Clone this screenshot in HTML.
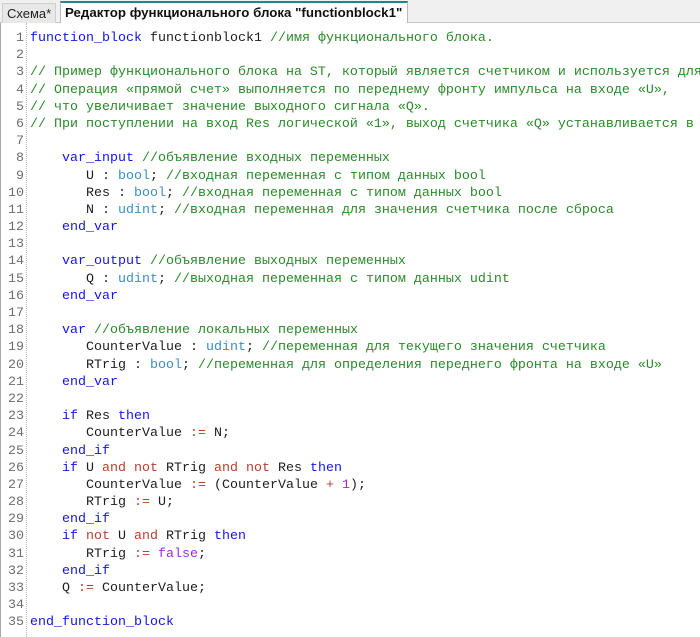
<!DOCTYPE html>
<html><head><meta charset="utf-8"><style>
body{margin:0;width:700px;height:637px;overflow:hidden;background:#fff;font-family:"Liberation Sans",sans-serif}
.tabs{position:absolute;left:0;top:0;width:700px;height:22px;background:#f0f0f0;border-bottom:1px solid #c8c8c8}
.t1{position:absolute;left:2px;top:3px;height:19px;padding:0 4px;font-size:13px;line-height:19px;color:#222;background:#e8e8e8;border:1px solid #cfcfcf;border-bottom:none}
.t2{position:absolute;left:60px;top:1px;height:22px;width:348px;background:#fff;border:1px solid #bbb;border-top:2px solid #1b8a8a;border-bottom:none;font-size:13.3px;font-weight:bold;line-height:20px;padding-left:4px;box-sizing:border-box;color:#111}
.ed{position:absolute;left:0;top:23px;width:700px;height:614px;border-left:1px solid #aaa}
.ln{position:absolute;left:0;top:7px;width:23px;text-align:right;font-family:"Liberation Mono",monospace;font-size:13.33px;line-height:17.18px;color:#6e6e6e;white-space:pre}
.sep{position:absolute;left:25px;top:0;height:614px;border-left:1px dotted #bbb}
.c{position:absolute;left:29px;top:7px;font-family:"Liberation Mono",monospace;font-size:13.33px;line-height:17.18px;white-space:pre;color:#1e1e1e}
.k{color:#1515e0}.g{color:#2a8a2a}.t{color:#3b8fc4}.o{color:#b5402e}.n{color:#9a2be2}
</style></head><body>
<div class="tabs"><div class="t1">Схема*</div><div class="t2">Редактор функционального блока "functionblock1"</div></div>
<div class="ed">
<div class="ln">1
2
3
4
5
6
7
8
9
10
11
12
13
14
15
16
17
18
19
20
21
22
23
24
25
26
27
28
29
30
31
32
33
34
35</div>
<div class="sep"></div>
<div class="c"><span class="k">function_block</span> functionblock1 <span class="g">//имя функционального блока.</span>

<span class="g">// Пример функционального блока на ST, который является счетчиком и используется для</span>
<span class="g">// Операция «прямой счет» выполняется по переднему фронту импульса на входе «U»,</span>
<span class="g">// что увеличивает значение выходного сигнала «Q».</span>
<span class="g">// При поступлении на вход Res логической «1», выход счетчика «Q» устанавливается в</span>

    <span class="k">var_input</span> <span class="g">//объявление входных переменных</span>
       U : <span class="t">bool</span>; <span class="g">//входная переменная с типом данных bool</span>
       Res : <span class="t">bool</span>; <span class="g">//входная переменная с типом данных bool</span>
       N : <span class="t">udint</span>; <span class="g">//входная переменная для значения счетчика после сброса</span>
    <span class="k">end_var</span>

    <span class="k">var_output</span> <span class="g">//объявление выходных переменных</span>
       Q : <span class="t">udint</span>; <span class="g">//выходная переменная с типом данных udint</span>
    <span class="k">end_var</span>

    <span class="k">var</span> <span class="g">//объявление локальных переменных</span>
       CounterValue : <span class="t">udint</span>; <span class="g">//переменная для текущего значения счетчика</span>
       RTrig : <span class="t">bool</span>; <span class="g">//переменная для определения переднего фронта на входе «U»</span>
    <span class="k">end_var</span>

    <span class="k">if</span> Res <span class="k">then</span>
       CounterValue <span class="o">:=</span> N;
    <span class="k">end_if</span>
    <span class="k">if</span> U <span class="o">and not</span> RTrig <span class="o">and not</span> Res <span class="k">then</span>
       CounterValue <span class="o">:=</span> (CounterValue <span class="o">+</span> <span class="n">1</span>);
       RTrig <span class="o">:=</span> U;
    <span class="k">end_if</span>
    <span class="k">if</span> <span class="o">not</span> U <span class="o">and</span> RTrig <span class="k">then</span>
       RTrig <span class="o">:=</span> <span class="n">false</span>;
    <span class="k">end_if</span>
    Q <span class="o">:=</span> CounterValue;

<span class="k">end_function_block</span></div>
</div>
</body></html>
